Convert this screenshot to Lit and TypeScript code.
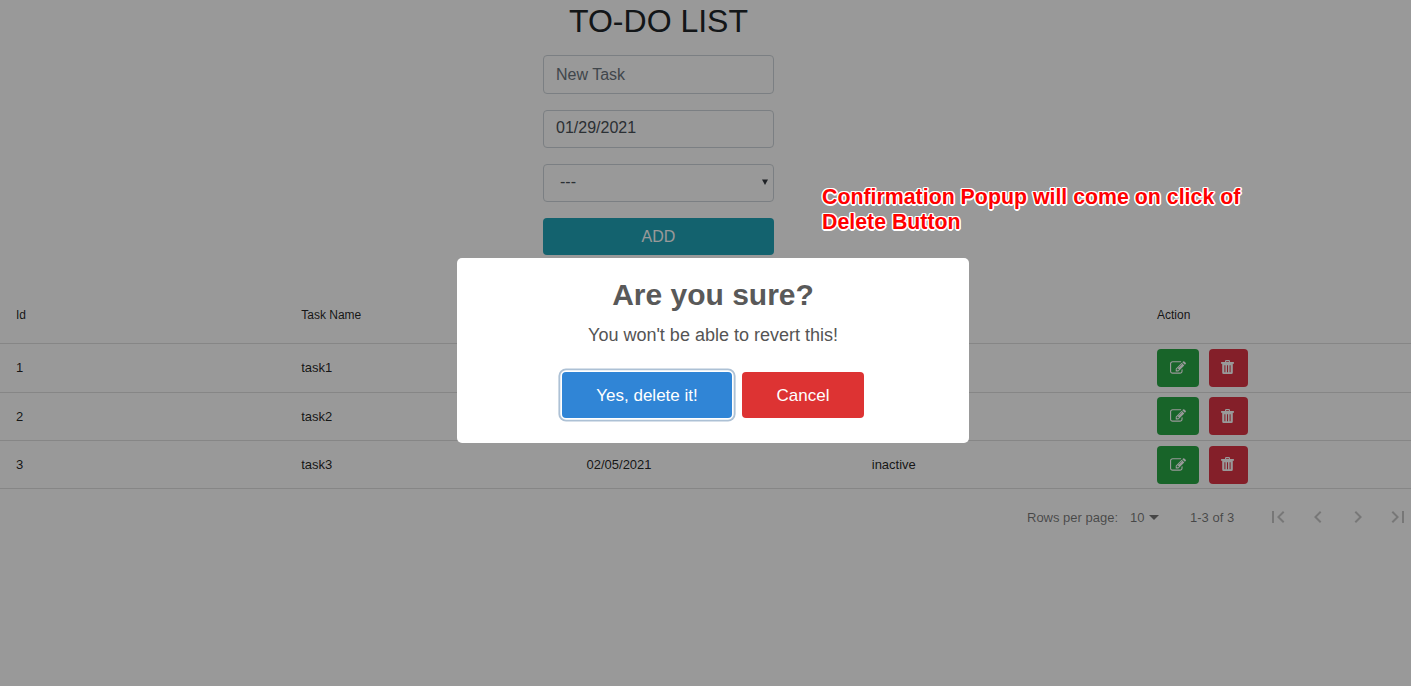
import { LitElement, html, css, svg } from "lit";
import { customElement, state } from "lit/decorators.js";

const EDIT = "M888 1184l116-116-152-152-116 116v56h96v96h56zm440-720q-16-16-33 1l-350 350q-17 17-1 33t33-1l350-350q17-17 1-33zm80 594v190q0 119-84.5 203.5t-203.5 84.5h-832q-119 0-203.5-84.5t-84.5-203.5v-832q0-119 84.5-203.5t203.5-84.5h832q63 0 117 25 15 7 18 23 3 17-9 29l-49 49q-14 14-32 8-23-6-45-6h-832q-66 0-113 47t-47 113v832q0 66 47 113t113 47h832q66 0 113-47t47-113v-126q0-13 9-22l64-64q15-15 35-7t20 29zm-96-738l288 288-672 672h-288v-288zm444 132l-92 92-288-288 92-92q28-28 68-28t68 28l152 152q28 28 28 68t-28 68z";
const TRASH = "M4 2V1.2Q4 0 5.2 0h2.6Q9 0 9 1.2V2h3.4q.6 0 .6.6v.8q0 .3-.3.3h-.9v8.8q0 1.5-1.4 1.5H2.6q-1.4 0-1.4-1.5V3.7H.3Q0 3.7 0 3.4v-.8Q0 2 .6 2zM5.1 2h2.8V1.2H5.1zM3.4 5.2v7h1v-7zM6 5.2v7h1v-7zM8.6 5.2v7h1v-7z";
const PAGER = [
  "M18.41 16.59L13.82 12l4.59-4.59L17 6l-6 6 6 6zM6 6h2v12H6z",
  "M15.41 7.41L14 6l-6 6 6 6 1.41-1.41L10.83 12z",
  "M10 6L8.59 7.41 13.17 12l-4.58 4.59L10 18l6-6z",
  "M5.59 7.41L10.18 12l-4.59 4.59L7 18l6-6-6-6zM16 6h2v12h-2z",
];

@customElement("app-root")
export class AppRoot extends LitElement {
  @state() private tasks = [
    { id: 1, name: "task1", date: "01/29/2021", status: "active" },
    { id: 2, name: "task2", date: "01/30/2021", status: "active" },
    { id: 3, name: "task3", date: "02/05/2021", status: "inactive" },
  ];

  static styles = css`
    :host {
      display: block;
      position: relative;
      width: 100%;
      height: 686px;
      overflow: hidden;
      background: #fff;
      color: #212529;
      font-family: "Liberation Sans", Arial, sans-serif;
      font-size: 16px;
    }
    * { box-sizing: border-box; }
    svg { display: block; fill: currentColor; }
    .form {
      width: 231px;
      margin: 0 0 0 543px;
      padding-top: 2px;
      display: flex;
      flex-direction: column;
      gap: 16px;
    }
    h1 {
      margin: 0 0 -1px;
      font-size: 32px;
      font-weight: 400;
      line-height: 38.4px;
      text-align: center;
      white-space: nowrap;
    }
    .field {
      height: 38.3px;
      border: 1px solid #ced4da;
      border-radius: 4px;
      padding: 0 12px 1px;
      display: flex;
      align-items: center;
      color: #495057;
    }
    .placeholder { color: #6c757d; padding-bottom: 0; }
    .select { padding: 0 5px 2px 16px; justify-content: space-between; }
    .arrow { width: 6px; height: 6px; color: #343a40; }
    .add {
      height: 37px;
      border: 0;
      border-radius: 4px;
      background: #20a3b7;
      color: #fff;
      font: inherit;
      padding: 1px 0 0;
    }
    .table { width: 1426px; margin-top: 32px; }
    .row {
      display: grid;
      grid-template-columns: repeat(5, 285.25px);
      align-items: center;
      height: 48.4px;
      border-bottom: 1px solid rgba(0, 0, 0, 0.12);
      font-size: 13px;
      color: rgba(0, 0, 0, 0.87);
    }
    .head { height: 57px; font-size: 12px; }
    .cell { padding: 0 16px; display: flex; gap: 10px; }
    .btn {
      height: 38px;
      width: 42px;
      border: 0;
      border-radius: 4px;
      padding: 0;
      display: flex;
      align-items: center;
      justify-content: center;
      background: #28a745;
      color: #fff;
    }
    .danger { width: 38.5px; background: #dc3545; padding: 0 1px 1px 0; }
    .pager {
      width: 1411px;
      height: 56px;
      display: flex;
      align-items: center;
      padding-left: 1027px;
      font-size: 13px;
      color: rgba(0, 0, 0, 0.54);
      white-space: nowrap;
    }
    .count { margin-left: 12px; }
    .caret { margin-left: 4px; width: 10px; height: 5px; }
    .range { margin-left: 31.5px; }
    .nav { display: flex; gap: 16px; margin-left: 31.5px; color: rgba(0, 0, 0, 0.22); }
    .nav svg { flex: none; }
    .overlay { position: absolute; inset: 0; background: rgba(0, 0, 0, 0.4); }
    .dialog {
      position: absolute;
      left: 457px;
      top: 258px;
      width: 512px;
      height: 185px;
      border-radius: 5px;
      background: #fff;
      display: flex;
      flex-direction: column;
      align-items: center;
    }
    h2 {
      margin: 19px 0 0;
      font-size: 30px;
      line-height: 36px;
      color: #595959;
    }
    .message { margin-top: 12px; font-size: 18px; line-height: 20px; color: #545454; }
    .actions { display: flex; gap: 10px; margin-top: 27px; }
    .choice {
      width: 170px;
      height: 46px;
      border: 0;
      border-radius: 4px;
      padding: 1px 0 0;
      background: #3085d6;
      color: #fff;
      font: inherit;
      font-size: 17px;
      box-shadow: 0 0 0 1.7px #fff, 0 0 0 3.6px rgba(50, 100, 150, 0.4);
    }
    .cancel { width: 122px; background: #d33; box-shadow: none; }
    .note {
      position: absolute;
      left: 822px;
      top: 185px;
      width: 440px;
      font-size: 21.33px;
      line-height: 25px;
      font-weight: 700;
      color: #f00;
      text-shadow: -1.5px 0 #fff, 1.5px 0 #fff, 0 -1.5px #fff, 0 1.5px #fff,
        -1px -1px #fff, 1px -1px #fff, -1px 1px #fff, 1px 1px #fff;
    }
  `;

  render() {
    return html`
      <div class="form">
        <h1>TO-DO LIST</h1>
        <div class="field placeholder">New Task</div>
        <div class="field">01/29/2021</div>
        <div class="field select">
          <span>---</span>
          <svg class="arrow" viewBox="0 0 6 6"><path d="M0 0.5h6L3 6z"></path></svg>
        </div>
        <button class="add">ADD</button>
      </div>
      <div class="table">
        <div class="row head">
          ${["Id", "Task Name", "Date", "Status", "Action"].map((t) => html`<div class="cell">${t}</div>`)}
        </div>
        ${this.tasks.map(
          (t) => html`<div class="row">
            <div class="cell">${t.id}</div>
            <div class="cell">${t.name}</div>
            <div class="cell">${t.date}</div>
            <div class="cell">${t.status}</div>
            <div class="cell">
              <button class="btn">
                <svg width="16" height="16" viewBox="0 0 1792 1792"><path d=${EDIT}></path></svg>
              </button>
              <button class="btn danger">
                <svg width="13" height="14" viewBox="0 0 13 14"><path fill-rule="evenodd" d=${TRASH}></path></svg>
              </button>
            </div>
          </div>`
        )}
      </div>
      <div class="pager">
        <span>Rows per page:</span>
        <span class="count">10</span>
        <svg class="caret" viewBox="0 0 10 5"><path d="M0 0h10L5 5z"></path></svg>
        <span class="range">1-3 of 3</span>
        <div class="nav">
          ${PAGER.map((d) => html`<svg width="24" height="24" viewBox="0 0 24 24">${svg`<path d=${d}></path>`}</svg>`)}
        </div>
      </div>
      <div class="overlay"></div>
      <div class="dialog">
        <h2>Are you sure?</h2>
        <div class="message">You won't be able to revert this!</div>
        <div class="actions">
          <button class="choice">Yes, delete it!</button>
          <button class="choice cancel">Cancel</button>
        </div>
      </div>
      <div class="note">Confirmation Popup will come on click of<br />Delete Button</div>
    `;
  }
}
